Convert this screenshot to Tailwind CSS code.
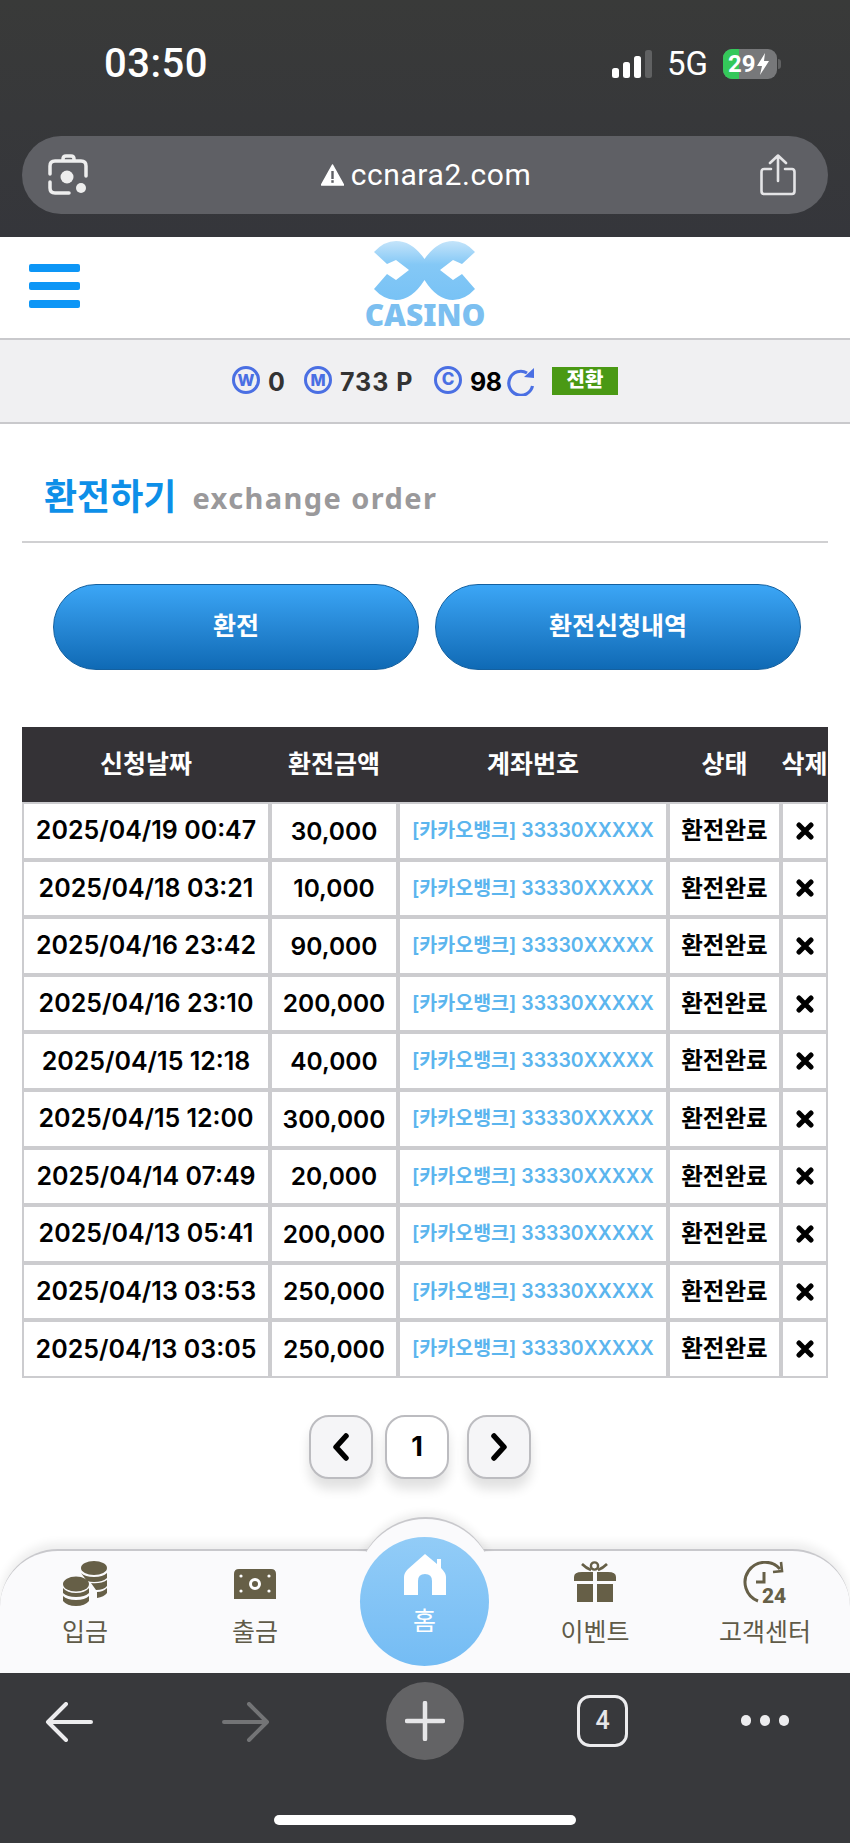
<!DOCTYPE html>
<html lang="ko">
<head>
    <meta charset="utf-8" />
    <meta name="viewport" content="width=device-width, initial-scale=1.0" />
    <title>환전하기</title>
    <script src="https://cdn.jsdelivr.net/npm/@tailwindcss/browser@4"></script>
</head>
<body class="bg-white font-['Inter','Noto_Sans_CJK_KR',sans-serif]">
<div class="w-[850px] h-[1843px] flex flex-col overflow-hidden">

    <!-- Browser chrome, top -->
    <div class="h-[237px] shrink-0 bg-gradient-to-b from-[#393a39] to-[#35363b] px-[22px] text-white">
        <div class="h-[136px] flex items-start justify-between pt-[44px] pl-[82px] pr-[47px]">
            <span class="text-[40px] leading-[40px] font-medium font-['Roboto'] tracking-[0.5px]">03:50</span>
            <div class="flex items-center gap-[15px] h-[40px]">
                <svg width="40" height="28" viewBox="0 0 40 28">
                    <rect x="0" y="18" width="7" height="10" rx="2.5" fill="#fff"/>
                    <rect x="11" y="12" width="7" height="16" rx="2.5" fill="#fff"/>
                    <rect x="22" y="6" width="7" height="22" rx="2.5" fill="#fff"/>
                    <rect x="33" y="0" width="7" height="28" rx="2.5" fill="#606162"/>
                </svg>
                <span class="text-[33px] leading-[40px] font-['Roboto']">5G</span>
                <div class="flex items-center gap-[1px]">
                    <div class="relative w-[54px] h-[30px] rounded-[9px] bg-[#77787a] overflow-hidden flex items-center pl-[5px] gap-[1px]">
                        <div class="absolute left-0 top-0 bottom-0 w-[16px] bg-[#34c85a]"></div>
                        <span class="relative text-[24px] leading-[30px] font-bold font-['Roboto']">29</span>
                        <svg class="relative" width="12" height="22" viewBox="0 0 12 22"><path d="M8 0 L0 13 L5 13 L3 22 L12 8 L7 8 Z" fill="#fff"/></svg>
                    </div>
                    <div class="w-[3px] h-[10px] rounded-r-full bg-[#606162]"></div>
                </div>
            </div>
        </div>
        <div class="h-[78px] rounded-[39px] bg-[#5f6065] flex items-center justify-between pl-[26px] pr-[32px]">
            <svg width="40" height="42" viewBox="0 0 40 42" fill="none" stroke="#eee" stroke-width="3.5" stroke-linecap="round">
                <path d="M15 6 L15 5 Q15 2 18 2 L23 2 Q26 2 26 5 L26 6"/>
                <path d="M2 20 L2 12 Q2 7 7 7 L33 7 Q38 7 38 12 L38 22"/>
                <path d="M2 28 L2 34 Q2 39 7 39 L21 39"/>
                <circle cx="19" cy="23" r="6.5" fill="#eee" stroke="none"/>
                <circle cx="33" cy="34" r="5" fill="#eee" stroke="none"/>
            </svg>
            <div class="flex items-center gap-[7px] ml-[4px]">
                <svg width="23" height="22" viewBox="0 0 23 22"><path d="M11.5 1 L22.5 21 L0.5 21 Z" fill="#fff" stroke="#fff" stroke-linejoin="round" stroke-width="1.5"/><rect x="10.3" y="7" width="2.4" height="8" fill="#5f6065"/><rect x="10.3" y="16.2" width="2.4" height="2.6" fill="#5f6065"/></svg>
                <span class="text-[30px] leading-[40px] font-['Roboto'] tracking-[0.6px]">ccnara2.com</span>
            </div>
            <svg width="36" height="42" viewBox="0 0 36 42" fill="none" stroke="#e4e4e6" stroke-width="2.6" stroke-linecap="round" stroke-linejoin="round">
                <path d="M11 15 L4 15 Q1.5 15 1.5 18 L1.5 37 Q1.5 40 4 40 L32 40 Q34.5 40 34.5 37 L34.5 18 Q34.5 15 32 15 L25 15"/>
                <path d="M18 27 L18 2 M10 9 L18 1.5 L26 9"/>
            </svg>
        </div>
    </div>

    <!-- Site header with logo -->
    <div class="h-[101px] shrink-0 grid grid-cols-3 items-center">
        <div class="pl-[29px] pb-[3px] flex flex-col gap-[10px]">
            <div class="w-[51px] h-[8px] rounded-[2px] bg-[#0d96f6]"></div>
            <div class="w-[51px] h-[8px] rounded-[2px] bg-[#0d96f6]"></div>
            <div class="w-[51px] h-[8px] rounded-[2px] bg-[#0d96f6]"></div>
        </div>
        <div class="justify-self-center flex flex-col items-center pb-[7px]">
            <svg width="101" height="59" viewBox="0 0 101 59">
                <defs><linearGradient id="logoFill" x1="0" y1="0" x2="0" y2="1"><stop offset="0" stop-color="#c4e4fa"/><stop offset="0.4" stop-color="#84c8f6"/><stop offset="1" stop-color="#78c2f5"/></linearGradient></defs>
                <path d="M0 11 Q10 0 22 0 Q38 0 50.5 18 Q63 0 79 0 Q91 0 101 11 L88 23 L79 19 L66 29 L79 39 L88 33 L101 48 Q91 59 79 59 Q63 59 50.5 39 Q38 59 22 59 Q10 59 0 48 L13 33 L22 39 L35 29 L22 19 L13 23 Z" fill="url(#logoFill)"/>
            </svg>
            <span class="mt-[3px] text-[30px] leading-[24px] font-black font-['Noto_Sans'] text-[#7cbff0]">CASINO</span>
        </div>
        <div></div>
    </div>

    <!-- Balance strip -->
    <div class="h-[86px] shrink-0 bg-[#f0f0f2] border-y-2 border-[#c9c9cc] flex items-center pl-[232px] text-[25px] font-bold">
        <span class="w-[28px] h-[28px] mb-[3px] rounded-full border-[3px] border-[#4a6fe3] text-[#4a6fe3] text-[16px] font-extrabold leading-none flex items-center justify-center">W</span>
        <span class="ml-[8px] mt-[3px] w-[36px] text-[#333]">0</span>
        <span class="w-[28px] h-[28px] mb-[3px] rounded-full border-[3px] border-[#4a6fe3] text-[#4a6fe3] text-[16px] font-extrabold leading-none flex items-center justify-center">M</span>
        <span class="ml-[8px] mt-[3px] w-[94px] text-[#333] tracking-[1px]">733 P</span>
        <span class="w-[28px] h-[28px] mb-[3px] rounded-full border-[3px] border-[#4a6fe3] text-[#4a6fe3] text-[17px] font-extrabold leading-none flex items-center justify-center">C</span>
        <span class="ml-[8px] mt-[3px] w-[37px] text-black tracking-[-0.5px]">98</span>
        <svg width="28" height="30" viewBox="0 0 28 30" fill="none" stroke="#4a6fe3" stroke-width="3.2">
            <path d="M20 7 A12 12 0 1 0 25.5 20"/>
            <path d="M27 2 L27 12 L17 11 Z" fill="#4a6fe3" stroke="none"/>
        </svg>
        <span class="ml-[17px] w-[66px] h-[28px] bg-[#4a9914] text-white text-[20px] font-extrabold leading-[27px] text-center">전환</span>
    </div>

    <!-- Page content -->
    <div class="flex-1 px-[22px]">
        <div class="h-[119px] border-b-2 border-[#d0d0d2] flex items-center pt-[28px] pl-[22px] gap-[16px]">
            <h1 class="text-[36px] leading-[40px] font-bold text-[#0d8fe8]">환전하기</h1>
            <span class="mt-[3px] text-[29px] leading-[40px] font-bold font-['Noto_Sans'] text-[#9a999b] tracking-[1.4px]">exchange order</span>
        </div>

        <div class="flex gap-[16px] pl-[31px] pr-[27px] mt-[41px]">
            <button class="w-[366px] h-[86px] rounded-[43px] border border-[#14609f] bg-gradient-to-b from-[#3ba6f6] to-[#0f6ab5] text-white text-[25px] font-bold">환전</button>
            <button class="w-[366px] h-[86px] rounded-[43px] border border-[#14609f] bg-gradient-to-b from-[#3ba6f6] to-[#0f6ab5] text-white text-[25px] font-bold">환전신청내역</button>
        </div>

        <table class="mt-[57px] w-[806px] table-fixed border-separate border-spacing-0 text-center">
            <colgroup>
                <col class="w-[248px]" /><col class="w-[128px]" /><col class="w-[270px]" /><col class="w-[113px]" /><col class="w-[47px]" />
            </colgroup>
            <thead>
                <tr class="h-[75px] bg-[#343236] text-white text-[25px] font-bold">
                    <th>신청날짜</th><th>환전금액</th><th>계좌번호</th><th>상태</th><th class="whitespace-nowrap">삭제</th>
                </tr>
            </thead>
            <tbody id="orders" class="leading-none font-semibold text-black"></tbody>
        </table>

        <!-- Pagination -->
        <div class="flex mt-[37px] pl-[287px]">
            <div class="w-[64px] h-[64px] rounded-[20px] border-2 border-[#bcbcc0] bg-[#f5f5f7] shadow-[0_10px_12px_rgba(0,0,0,0.12)] flex items-center justify-center">
                <svg width="18" height="28" viewBox="0 0 18 28" fill="none" stroke="#000" stroke-width="5.5" stroke-linecap="round" stroke-linejoin="round"><path d="M14 3 L4 14 L14 25"/></svg>
            </div>
            <div class="ml-[12px] w-[64px] h-[64px] rounded-[20px] border-2 border-[#bcbcc0] bg-white shadow-[0_10px_12px_rgba(0,0,0,0.12)] flex items-center justify-center text-[27px] font-bold">1</div>
            <div class="ml-[18px] w-[64px] h-[64px] rounded-[20px] border-2 border-[#bcbcc0] bg-[#f5f5f7] shadow-[0_10px_12px_rgba(0,0,0,0.12)] flex items-center justify-center">
                <svg width="18" height="28" viewBox="0 0 18 28" fill="none" stroke="#000" stroke-width="5.5" stroke-linecap="round" stroke-linejoin="round"><path d="M4 3 L14 14 L4 25"/></svg>
            </div>
        </div>
    </div>

    <!-- Bottom tab bar -->
    <div class="relative h-[124px] shrink-0 rounded-t-[58px] bg-[#fafafc] border-t-2 border-[#c8c8cc] shadow-[0_-6px_10px_rgba(0,0,0,0.07)] grid grid-cols-5 text-[25px] text-[#5f5a48]">
        <div class="absolute left-[357px] top-[-34px] w-[137px] h-[137px] rounded-full bg-[#fafafc] border-t-2 border-[#c8c8cc] shadow-[0_-4px_8px_rgba(0,0,0,0.07)] [clip-path:inset(-12px_-12px_102px_-12px)]"></div>
        <a class="flex flex-col items-center pt-[10px]">
            <svg width="44" height="46" viewBox="0 0 44 46" fill="#665f47">
                <ellipse cx="31" cy="7" rx="13" ry="7"/>
                <path d="M18 12 Q22 16 31 16 Q40 16 44 12 L44 17 Q40 21 31 21 Q27 21 24 20 Z"/>
                <path d="M28 22 Q38 23 44 19 L44 25 Q41 29 33 29 Z M34 31 Q40 31 44 27 L44 32 Q41 36 34 37 Z"/>
                <ellipse cx="13" cy="23" rx="13" ry="7.5"/>
                <path d="M0 27 Q4 32 13 32 Q22 32 26 27 L26 32 Q22 36 13 36 Q4 36 0 32 Z"/>
                <path d="M0 35 Q4 39 13 39 Q22 39 26 35 L26 40 Q22 45 13 45 Q4 45 0 40 Z"/>
            </svg>
            <span class="mt-[8px] leading-[34px]">입금</span>
        </a>
        <a class="flex flex-col items-center pt-[10px]">
            <svg class="mt-[8px]" width="42" height="30" viewBox="0 0 42 30">
                <path d="M5 0 L37 0 Q42 0 42 5 L42 30 L0 30 L0 5 Q0 0 5 0 Z" fill="#665f47"/>
                <circle cx="21" cy="15" r="4.5" fill="none" stroke="#fff" stroke-width="3"/>
                <circle cx="7" cy="7" r="1.6" fill="#fff"/><circle cx="7" cy="22" r="1.6" fill="#fff"/><circle cx="35" cy="7" r="1.6" fill="#fff"/><circle cx="35" cy="22" r="1.6" fill="#fff"/>
            </svg>
            <span class="mt-[16px] leading-[34px]">출금</span>
        </a>
        <a class="relative">
            <div class="absolute left-[20px] top-[-14px] w-[129px] h-[129px] rounded-full bg-gradient-to-b from-[#92ccf7] to-[#74bcf4] flex flex-col items-center pt-[17px] text-white">
                <svg width="42" height="41" viewBox="0 0 42 41" fill="#fff">
                    <path d="M21 0 L33 10 L33 5 L37 5 L37 14 Q42 19 42 23 L42 41 L28 41 L28 27 Q28 20 21 20 Q14 20 14 27 L14 41 L0 41 L0 23 Q0 19 4 15 Z"/>
                </svg>
                <span class="mt-[9px] text-[25px] leading-[34px]">홈</span>
            </div>
        </a>
        <a class="flex flex-col items-center pt-[10px]">
            <svg width="42" height="42" viewBox="0 0 42 42" fill="#665f47">
                <circle cx="20.5" cy="5" r="3.6" fill="none" stroke="#665f47" stroke-width="2.4"/>
                <path d="M17 9 Q12 7 8 3 M24 9 Q29 7 33 3" fill="none" stroke="#665f47" stroke-width="2.6"/>
                <path d="M0 20 L0 16 Q0 11 8 11 L19 11 L19 20 Z M23 11 L34 11 Q42 11 42 16 L42 20 L23 20 Z M3 23 L19 23 L19 41 L3 41 Z M23 23 L39 23 L39 41 L23 41 Z"/>
            </svg>
            <span class="mt-[12px] leading-[34px]">이벤트</span>
        </a>
        <a class="flex flex-col items-center pt-[10px]">
            <svg width="44" height="44" viewBox="0 0 44 44" fill="none" stroke="#665f47" stroke-width="3">
                <path d="M15 40 A20 20 0 1 1 37 8"/>
                <path d="M38 1 L39 10 L30 11" stroke-width="2.6"/>
                <path d="M21 11 L21 21 L13 21" stroke-width="3"/>
                <text x="19" y="42" fill="#665f47" stroke="none" font-size="21" font-weight="800" font-family="Roboto">24</text>
            </svg>
            <span class="mt-[10px] leading-[34px] whitespace-nowrap">고객센터</span>
        </a>
    </div>

    <!-- Browser chrome, bottom -->
    <div class="h-[170px] shrink-0 bg-[#38393c] flex flex-col items-center">
        <div class="w-full h-[142px] flex items-start pt-[9px] pl-[45px]">
            <svg class="mt-[20px]" width="48" height="40" viewBox="0 0 48 40" fill="none" stroke="#ececee" stroke-width="4" stroke-linecap="round" stroke-linejoin="round"><path d="M21 2 L3 20 L21 38 M3 20 L46 20"/></svg>
            <svg class="mt-[20px] ml-[129px]" width="48" height="40" viewBox="0 0 48 40" fill="none" stroke="#737476" stroke-width="4" stroke-linecap="round" stroke-linejoin="round"><path d="M27 2 L45 20 L27 38 M2 20 L45 20"/></svg>
            <div class="ml-[116px] w-[78px] h-[78px] rounded-full bg-[#636365] flex items-center justify-center">
                <svg width="40" height="40" viewBox="0 0 40 40" stroke="#e6e6e8" stroke-width="4.5" stroke-linecap="round"><path d="M20 2 L20 38 M2 20 L38 20"/></svg>
            </div>
            <div class="ml-[113px] mt-[13px] w-[51px] h-[52px] rounded-[13px] border-[3.5px] border-[#ececee] text-[#e6e6e8] text-[25px] font-medium font-['Roboto'] flex items-center justify-center">4</div>
            <div class="ml-[113px] mt-[33px] flex gap-[9px]">
                <div class="w-[10px] h-[11px] rounded-full bg-[#ececee]"></div>
                <div class="w-[10px] h-[11px] rounded-full bg-[#ececee]"></div>
                <div class="w-[10px] h-[11px] rounded-full bg-[#ececee]"></div>
            </div>
        </div>
        <div class="w-[302px] h-[10px] rounded-full bg-white"></div>
    </div>
</div>

<script>
    // Exchange history rows: [requested at, amount]
    const orders = [
        ['2025/04/19 00:47', '30,000'],
        ['2025/04/18 03:21', '10,000'],
        ['2025/04/16 23:42', '90,000'],
        ['2025/04/16 23:10', '200,000'],
        ['2025/04/15 12:18', '40,000'],
        ['2025/04/15 12:00', '300,000'],
        ['2025/04/14 07:49', '20,000'],
        ['2025/04/13 05:41', '200,000'],
        ['2025/04/13 03:53', '250,000'],
        ['2025/04/13 03:05', '250,000'],
    ];
    document.getElementById('orders').innerHTML = orders.map(([date, amount]) => `
        <tr class="h-[57.6px]">
            <td class="border-2 border-[#cccccf] text-[25px] whitespace-nowrap">${date}</td>
            <td class="border-2 border-[#cccccf] text-[24.5px]">${amount}</td>
            <td class="border-2 border-[#cccccf] text-[19.5px] whitespace-nowrap text-[#5bb5ee]">[카카오뱅크] 33330XXXXX</td>
            <td class="border-2 border-[#cccccf] text-[23.5px] font-bold">환전완료</td>
            <td class="border-2 border-[#cccccf]"><svg class="mx-auto" width="18" height="18" viewBox="0 0 18 18"><path d="M3 3 L15 15 M15 3 L3 15" stroke="#000" stroke-width="5" stroke-linecap="round"/></svg></td>
        </tr>`).join('');
</script>
</body>
</html>
